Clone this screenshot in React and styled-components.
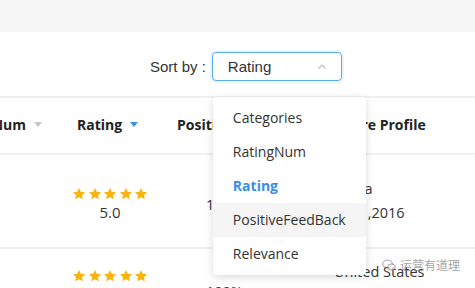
import React from 'react'
import styled, { createGlobalStyle } from 'styled-components'

const GlobalStyle = createGlobalStyle`
  html, body {
    margin: 0;
    padding: 0;
    background: #fff;
    overflow: hidden;
  }
  body {
    width: 475px;
    height: 288px;
    font-family: "Open Sans", "Noto Sans", sans-serif;
    color: #333;
  }
`

const Page = styled.div`
  position: relative;
  width: 475px;
  height: 288px;
  overflow: hidden;
`

const TopBand = styled.div`
  height: 32px;
  background: #f7f7f7;
`

const Toolbar = styled.div`
  display: flex;
  align-items: center;
  padding: 20px 0 15px 150px;
  gap: 6px;
`

const SortLabel = styled.span`
  font-family: "Liberation Sans", Arial, sans-serif;
  font-size: 15px;
  color: #333;
`

const SelectWrap = styled.div`
  position: relative;
`

const SelectBox = styled.div`
  box-sizing: border-box;
  width: 130px;
  height: 29px;
  border: 1px solid #5aa9e8;
  border-radius: 4px;
  box-shadow: 0 0 0 2px rgba(90, 169, 232, 0.12);
  display: flex;
  align-items: center;
  justify-content: space-between;
  padding: 0 15px 0 15px;
  font-family: "Liberation Sans", Arial, sans-serif;
  font-size: 15px;
  color: #333;
`

const Menu = styled.ul`
  position: absolute;
  z-index: 5;
  top: 45px;
  left: 1px;
  width: 153px;
  margin: 0;
  padding: 4px 0;
  list-style: none;
  background: #fff;
  border-radius: 4px;
  box-shadow: 0 2px 8px rgba(0, 0, 0, 0.15);
`

const MenuItem = styled.li`
  height: 34px;
  line-height: 34px;
  padding-left: 20px;
  font-size: 14px;
  color: ${p => (p.$active ? '#3a8ee6' : '#333')};
  font-weight: ${p => (p.$active ? 700 : 400)};
  background: ${p => (p.$hover ? '#f5f5f5' : '#fff')};
`

const Table = styled.div`
  border-top: 2px solid #f0f0f0;
`

const Row = styled.div`
  box-sizing: border-box;
  display: grid;
  grid-template-columns: 60px 100px 174px 1fr;
  align-items: center;
  height: ${p => p.$h}px;
  border-bottom: 2px solid #f0f0f0;
`

const HeadCell = styled.div`
  min-width: 0;
  display: flex;
  align-items: center;
  justify-content: ${p => p.$justify || 'flex-start'};
  gap: 8px;
  padding-left: ${p => p.$pl || 0}px;
  padding-right: ${p => p.$pr || 0}px;
  padding-bottom: 2px;
  font-size: 14px;
  font-weight: 700;
  color: #222;
  white-space: nowrap;

  svg {
    flex-shrink: 0;
  }
`

const Cell = styled.div`
  min-width: 0;
  display: flex;
  flex-direction: column;
  align-items: ${p => p.$align || 'flex-start'};
  padding-left: ${p => p.$pl || 0}px;
  padding-top: ${p => p.$pt || 0}px;
  padding-bottom: ${p => p.$pb || 0}px;
  font-size: 14.5px;
  color: #333;
  white-space: nowrap;
`

const Line = styled.div`
  line-height: 24px;
`

const Stars = styled.div`
  display: flex;
  gap: 1.5px;
  margin-bottom: 2px;
`

const Score = styled.div`
  font-size: 15px;
  line-height: 18px;
`

const Watermark = styled.div`
  position: absolute;
  right: 15px;
  bottom: 15px;
  display: flex;
  align-items: center;
  gap: 4px;
  font-family: "Noto Sans CJK SC", sans-serif;
  font-size: 12px;
  color: rgba(120, 120, 120, 0.7);
`

const Caret = ({ color }) => (
  <svg width="8" height="5" viewBox="0 0 8 5">
    <path d="M0 0 L8 0 L4 5 Z" fill={color} />
  </svg>
)

const Star = () => (
  <svg width="14" height="14" viewBox="0 0 24 24">
    <path
      d="M12 1.5l3.1 6.6 7.2.9-5.3 5 1.4 7.1L12 17.6l-6.4 3.5 1.4-7.1-5.3-5 7.2-.9z"
      fill="#f9b40f"
    />
  </svg>
)

const StarRow = () => (
  <Stars>
    {[0, 1, 2, 3, 4].map(i => (
      <Star key={i} />
    ))}
  </Stars>
)

const options = ['Categories', 'RatingNum', 'Rating', 'PositiveFeedBack', 'Relevance']

export default function App() {
  return (
    <Page>
      <GlobalStyle />
      <TopBand />
      <Toolbar>
        <SortLabel>Sort by :</SortLabel>
        <SelectWrap>
          <SelectBox>
            <span>Rating</span>
            <svg width="8" height="5" viewBox="0 0 8 5">
              <path d="M0.5 4.5 L4 1 L7.5 4.5" fill="none" stroke="#bbb" strokeWidth="1.2" />
            </svg>
          </SelectBox>
          <Menu>
            {options.map(o => (
              <MenuItem key={o} $active={o === 'Rating'} $hover={o === 'PositiveFeedBack'}>
                {o}
              </MenuItem>
            ))}
          </Menu>
        </SelectWrap>
      </Toolbar>

      <Table>
        <Row $h={57}>
          <HeadCell $justify="flex-end" $pr={18}>
            RatingNum <Caret color="#c4c4c4" />
          </HeadCell>
          <HeadCell $pl={17}>
            Rating <Caret color="#3a8ee6" />
          </HeadCell>
          <HeadCell $pl={17}>
            Positive Feedback <Caret color="#c4c4c4" />
          </HeadCell>
          <HeadCell $pl={5}>Store Profile</HeadCell>
        </Row>
        <Row $h={94}>
          <Cell />
          <Cell $align="center" $pt={6}>
            <StarRow />
            <Score>5.0</Score>
          </Cell>
          <Cell $pl={46} $pt={6}>
            100%
          </Cell>
          <Cell>
            <Line>China</Line>
            <Line>Jun 1,2016</Line>
          </Cell>
        </Row>
        <Row $h={76}>
          <Cell />
          <Cell $align="center">
            <StarRow />
            <Score>5.0</Score>
          </Cell>
          <Cell $pl={46} $pt={10}>
            100%
          </Cell>
          <Cell $pb={4}>
            <Line>United States</Line>
            <Line>Jun 8,2017</Line>
          </Cell>
        </Row>
      </Table>

      <Watermark>
        <svg width="14" height="12" viewBox="0 0 14 12">
          <ellipse cx="5.5" cy="5" rx="4.8" ry="4" fill="none" stroke="rgba(120,120,120,0.7)" strokeWidth="1" />
          <ellipse cx="9.5" cy="8" rx="3.8" ry="3.1" fill="rgba(255,255,255,0.6)" stroke="rgba(120,120,120,0.7)" strokeWidth="1" />
        </svg>
        <span>运营有道理</span>
      </Watermark>
    </Page>
  )
}
